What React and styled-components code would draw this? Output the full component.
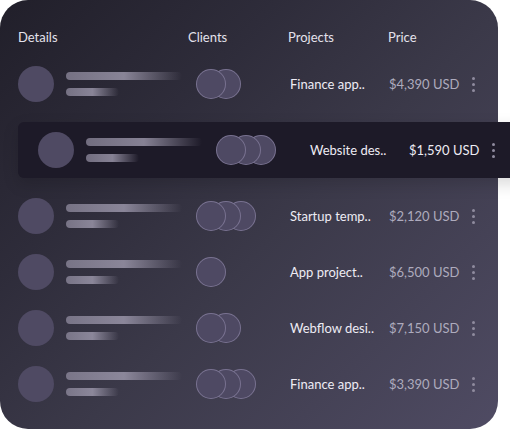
import React from "react";
import styled, { createGlobalStyle } from "styled-components";

const rows = [
  { clients: 2, project: "Finance app..", price: "$4,390 USD" },
  { clients: 3, project: "Website des..", price: "$1,590 USD", active: true },
  { clients: 3, project: "Startup temp..", price: "$2,120 USD" },
  { clients: 1, project: "App project..", price: "$6,500 USD" },
  { clients: 2, project: "Webflow desi..", price: "$7,150 USD" },
  { clients: 3, project: "Finance app..", price: "$3,390 USD" },
];

const App = () => {
  return (
    <>
      <GlobalStyle />
      <Card>
        <Header>
          <span>Details</span>
          <span>Clients</span>
          <span>Projects</span>
          <span>Price</span>
        </Header>
        {rows.map((row, i) => (
          <Row key={i} $active={row.active}>
            <Details>
              <Avatar />
              <Lines>
                <Line $w={116} />
                <Line $w={53} />
              </Lines>
            </Details>
            <Clients>
              {Array.from({ length: row.clients }).map((_, j) => (
                <Client key={j} $z={row.clients - j} />
              ))}
            </Clients>
            <Project>{row.project}</Project>
            <Price $active={row.active}>{row.price}</Price>
            <Menu>
              <Dot />
              <Dot />
              <Dot />
            </Menu>
          </Row>
        ))}
      </Card>
    </>
  );
};

const GlobalStyle = createGlobalStyle`
  body {
    margin: 0;
    background: #ffffff;
    overflow: hidden;
    font-family: "Lato", "Liberation Sans", sans-serif;
  }
`;

const Card = styled.div`
  width: 498px;
  height: 429px;
  box-sizing: border-box;
  padding: 28px 0 0 18px;
  border-radius: 28px;
  background: linear-gradient(135deg, #211f2a 0%, #2e2c3a 30%, #3b3949 55%, #4f4b63 100%);
`;

const Header = styled.div`
  display: grid;
  grid-template-columns: 170px 100px 100px 84px;
  height: 18px;
  margin-bottom: 10px;
  font-size: 13px;
  line-height: 18px;
  color: #e4e2ec;
`;

const Row = styled.div`
  display: grid;
  grid-template-columns: 170px 100px 100px 84px 30px;
  align-items: center;
  height: 56px;
  box-sizing: border-box;
  width: ${(p) => (p.$active ? "510px" : "auto")};
  padding-left: ${(p) => (p.$active ? "20px" : "0")};
  margin: ${(p) => (p.$active ? "10px 0" : "0")};
  border-radius: ${(p) => (p.$active ? "6px 0 0 6px" : "0")};
  background: ${(p) => (p.$active ? "#1d1a28" : "transparent")};
  box-shadow: ${(p) => (p.$active ? "0 6px 16px rgba(0, 0, 0, 0.15)" : "none")};
`;

const Details = styled.div`
  display: flex;
  align-items: center;
  gap: 12px;
`;

const Avatar = styled.div`
  width: 36px;
  height: 36px;
  border-radius: 50%;
  background: #4f4a63;
`;

const Lines = styled.div`
  display: flex;
  flex-direction: column;
  gap: 8px;
`;

const Line = styled.div`
  width: ${(p) => p.$w}px;
  height: 8px;
  border-radius: 4px;
  background: linear-gradient(
    90deg,
    rgba(150, 145, 165, 0.7) 0%,
    rgba(160, 155, 175, 0.8) 50%,
    rgba(150, 145, 165, 0) 100%
  );
`;

const Clients = styled.div`
  display: flex;
  padding-left: 8px;
`;

const Client = styled.div`
  position: relative;
  z-index: ${(p) => p.$z};
  width: 30px;
  height: 30px;
  box-sizing: border-box;
  border-radius: 50%;
  background: #4e4963;
  border: 1px solid rgba(140, 132, 165, 0.7);
  & + & {
    margin-left: -15px;
  }
`;

const Project = styled.div`
  padding-left: 2px;
  font-size: 13px;
  color: #eeecf4;
  white-space: nowrap;
`;

const Price = styled.div`
  padding-left: 1px;
  font-size: 13px;
  color: ${(p) => (p.$active ? "#eeecf4" : "#aeabbd")};
  white-space: nowrap;
`;

const Menu = styled.div`
  display: flex;
  flex-direction: column;
  align-items: center;
  gap: 3px;
  width: 3px;
`;

const Dot = styled.span`
  width: 3px;
  height: 3px;
  border-radius: 50%;
  background: #8f8b9e;
`;

export default App;
